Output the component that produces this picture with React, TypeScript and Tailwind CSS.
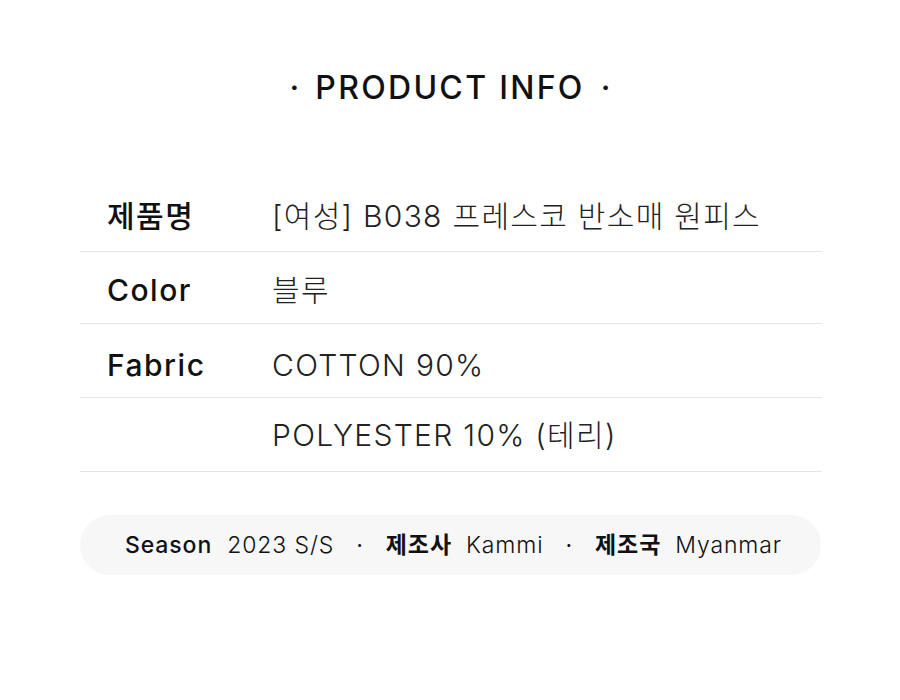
import React from "react";

const font = { fontFamily: '"Inter", "Noto Sans CJK KR", sans-serif' };

function Row({ label, value, cls }: { label: string; value: string; cls: string }) {
  return (
    <div className={`flex items-center border-b border-[#e6e6e6] ${cls}`}>
      <div className="w-[192px] pl-[27px] text-[30px] font-medium tracking-[1.5px] text-[#111]">{label}</div>
      <div className="text-[30px] font-light tracking-[1.3px] text-[#222]">{value}</div>
    </div>
  );
}

export default function App() {
  return (
    <div className="w-[900px] h-[700px] bg-white" style={font}>
      <div className="pt-[64px] flex items-center justify-center text-[32px] font-medium text-[#111]">
        <span>·</span>
        <span className="mx-[16px] tracking-[2.3px]">PRODUCT INFO</span>
        <span>·</span>
      </div>
      <div className="mx-[80px] mt-[68px] w-[742px]">
        <Row cls="h-[72px] pt-[2px]" label="제품명" value="[여성] B038 프레스코 반소매 원피스" />
        <Row cls="h-[72px] pt-[6px]" label="Color" value="블루" />
        <Row cls="h-[74px] pt-[9px]" label="Fabric" value="COTTON 90%" />
        <Row cls="h-[74px] pt-[2px]" label="" value="POLYESTER 10% (테리)" />
      </div>
      <div className="mx-[80px] mt-[43px] w-[741px] h-[60px] rounded-full bg-[#f7f7f7] flex items-center justify-center pl-[6px] text-[23px] tracking-[0.9px] text-[#111]">
        <span className="font-medium">Season</span>
        <span className="font-light ml-[15px]">2023 S/S</span>
        <span className="mx-[22px]">·</span>
        <span className="font-bold">제조사</span>
        <span className="font-light ml-[14px]">Kammi</span>
        <span className="mx-[22px]">·</span>
        <span className="font-bold">제조국</span>
        <span className="font-light ml-[14px]">Myanmar</span>
      </div>
    </div>
  );
}
